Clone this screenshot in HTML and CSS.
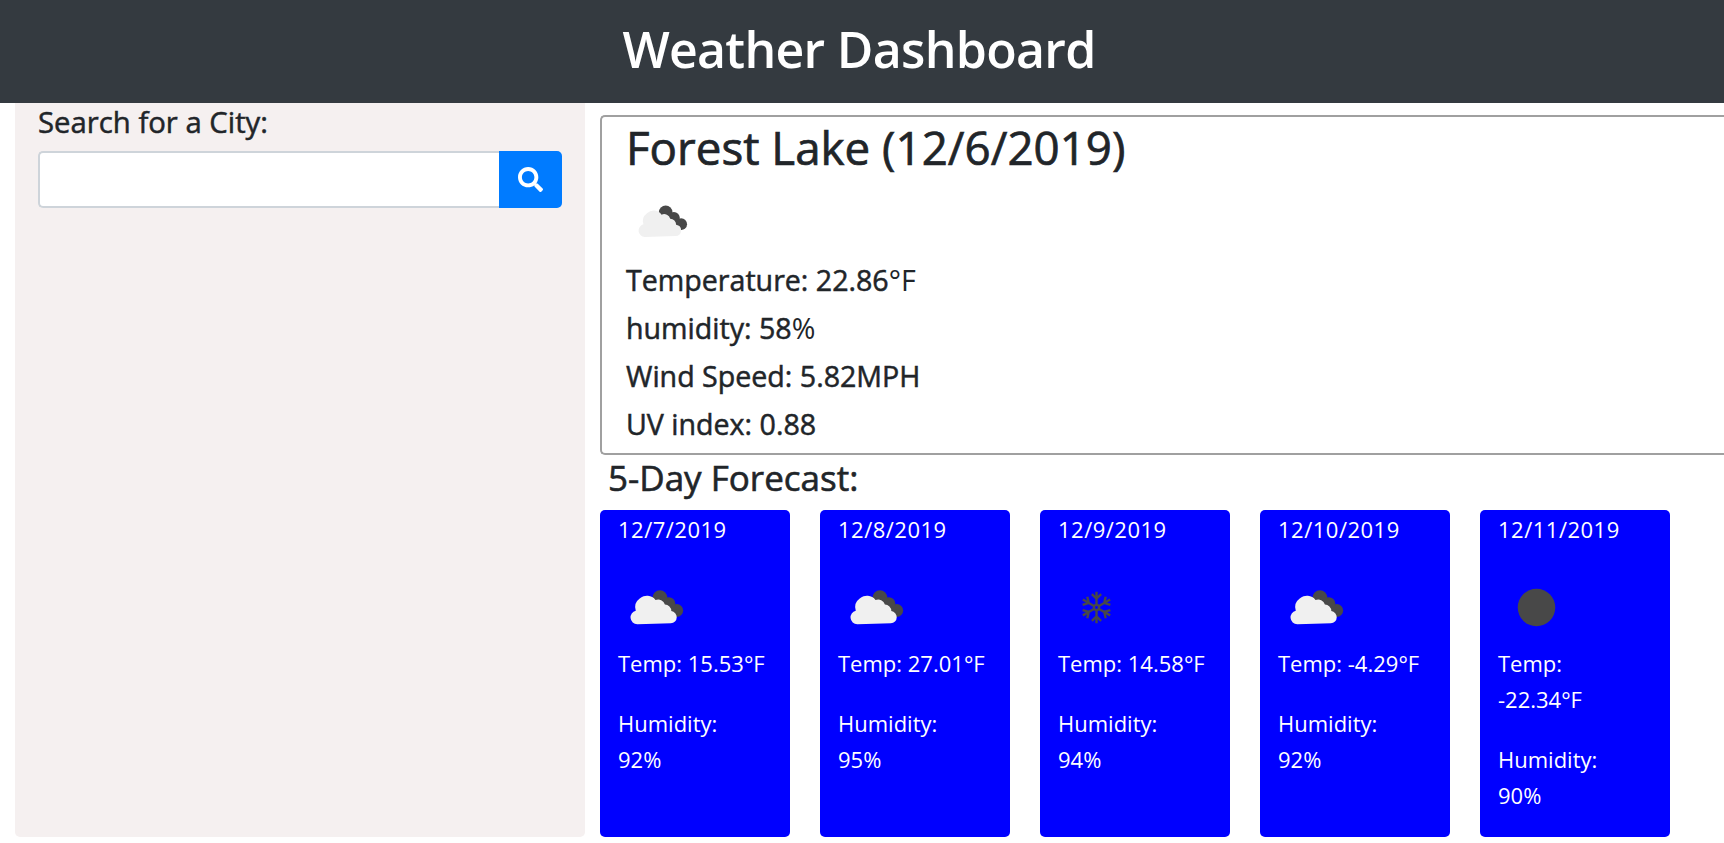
FILE: index.html
```html
<!DOCTYPE html>
<html lang="en">
<head>
  <meta charset="UTF-8">
  <title>Weather Dashboard</title>
  <link rel="stylesheet" href="styles.css">
</head>
<body>
  <svg class="icon-defs" width="0" height="0">
    <defs>
      <g id="clouds">
        <circle cx="42" cy="29" r="7.500" fill="#484848"/>
        <circle cx="51" cy="35" r="6.500" fill="#484848"/>
        <circle cx="59" cy="42" r="6.500" fill="#484848"/>
        <path d="M38 26 L56 32 L60 48 L44 48 Z" fill="#484848"/>
        <path d="M19 56 a7 7 0 0 1 -1.500 -13.800 a11 11 0 0 1 4 -12.200 a10.500 10.500 0 0 1 16 1.500 a7 7 0 0 1 9.500 4.500 a6.500 6.500 0 0 1 6.500 6.500 a6.500 6.500 0 0 1 5.500 6.500 a6 6 0 0 1 -6 6 Z" fill="currentColor"/>
      </g>
      <g id="snow" fill="none" stroke="#484848" stroke-width="2.400">
        <circle cx="38.500" cy="39" r="2.600"/>
        <g id="arm">
          <path d="M38.500 36 V23 M33.800 25.500 L38.500 30 L43.200 25.500"/>
        </g>
        <use href="#arm" transform="rotate(60 38.500 39)"/>
        <use href="#arm" transform="rotate(120 38.500 39)"/>
        <use href="#arm" transform="rotate(180 38.500 39)"/>
        <use href="#arm" transform="rotate(240 38.500 39)"/>
        <use href="#arm" transform="rotate(300 38.500 39)"/>
      </g>
    </defs>
  </svg>

  <header class="top-bar">
    <h1>Weather Dashboard</h1>
  </header>

  <div class="content">
    <aside class="sidebar">
      <label class="search-label" for="city">Search for a City:</label>
      <div class="search-group">
        <input class="search-input" id="city" type="text">
        <button class="search-btn" aria-label="Search">
          <svg viewBox="0 0 512 512" width="25" height="25"><path fill="#fff" d="M505 442.700L405.300 343c-4.500-4.500-10.600-7-17-7H372c27.600-35.300 44-79.700 44-128C416 93.100 322.900 0 208 0S0 93.100 0 208s93.100 208 208 208c48.300 0 92.700-16.400 128-44v16.300c0 6.400 2.500 12.500 7 17l99.700 99.700c9.400 9.400 24.600 9.400 33.900 0l28.300-28.300c9.400-9.400 9.400-24.600.1-34zM208 336c-70.700 0-128-57.200-128-128 0-70.700 57.200-128 128-128 70.700 0 128 57.200 128 128 0 70.700-57.200 128-128 128z"/></svg>
        </button>
      </div>
    </aside>

    <main class="main">
      <section class="current">
        <h2>Forest Lake (12/6/2019)</h2>
        <svg class="current-icon" viewBox="0 0 77 77" width="77" height="77"><use href="#clouds"/></svg>
        <p>Temperature: 22.86<span class="unit">°F</span></p>
        <p>humidity: 58<span class="unit">%</span></p>
        <p>Wind Speed: 5.82MPH</p>
        <p>UV index: 0.88</p>
      </section>

      <h3>5-Day Forecast:</h3>

      <div class="forecast">
        <div class="day">
          <div class="date">12/7/2019</div>
          <svg class="day-icon" viewBox="0 0 77 77" width="77" height="77"><use href="#clouds"/></svg>
          <p>Temp: 15.53°F</p>
          <p>Humidity:<br>92%</p>
        </div>
        <div class="day">
          <div class="date">12/8/2019</div>
          <svg class="day-icon" viewBox="0 0 77 77" width="77" height="77"><use href="#clouds"/></svg>
          <p>Temp: 27.01°F</p>
          <p>Humidity:<br>95%</p>
        </div>
        <div class="day">
          <div class="date">12/9/2019</div>
          <svg class="day-icon" viewBox="0 0 77 77" width="77" height="77"><use href="#snow"/></svg>
          <p>Temp: 14.58°F</p>
          <p>Humidity:<br>94%</p>
        </div>
        <div class="day">
          <div class="date">12/10/2019</div>
          <svg class="day-icon" viewBox="0 0 77 77" width="77" height="77"><use href="#clouds"/></svg>
          <p>Temp: -4.29°F</p>
          <p>Humidity:<br>92%</p>
        </div>
        <div class="day">
          <div class="date">12/11/2019</div>
          <svg class="day-icon" viewBox="0 0 77 77" width="77" height="77"><circle cx="38.500" cy="39" r="19" fill="#484848"/></svg>
          <p>Temp:<br>-22.34°F</p>
          <p>Humidity:<br>90%</p>
        </div>
      </div>
    </main>
  </div>
</body>
</html>
```

FILE: styles.css
```css
html, body { margin: 0; height: 100%; overflow: hidden; }
body { font-family: "Open Sans", "Noto Sans", sans-serif; color: #212529; background: #fff; }
p { margin: 0; }

.icon-defs { display: block; height: 0; }

.top-bar { height: 103px; box-sizing: border-box; padding: 0 6px 6px 0; background: #343a40; display: flex; align-items: center; justify-content: center; }
.top-bar h1 { margin: 0; font-size: 50px; font-weight: 600; color: #fff; letter-spacing: -0.700px; }

.content { display: flex; padding-left: 15px; gap: 15px; }

.sidebar { width: 570px; height: 734px; box-sizing: border-box; padding: 0 23px; background: #f5f0f0; border-radius: 0 0 5px 5px; }
.search-label { display: block; height: 48px; line-height: 38px; font-size: 29.300px; -webkit-text-stroke: 0.500px; }
.search-group { display: flex; height: 57px; }
.search-input { flex: 1; min-width: 0; box-sizing: border-box; border: 2px solid #ced4da; border-right: none; border-radius: 5px 0 0 5px; background: #fff; }
.search-btn { width: 63px; border: none; padding: 0; background: #007bff; border-radius: 0 5px 5px 0; display: flex; align-items: center; justify-content: center; }

.main { flex: 1; min-width: 0; padding-top: 12px; }

.current { height: 340px; box-sizing: border-box; border: 2px solid #a0a0a0; border-right: none; border-radius: 5px 0 0 5px; padding-left: 24px; }
.current h2 { margin: 0; height: 69px; line-height: 60px; font-size: 45.700px; -webkit-text-stroke: 0.700px; font-weight: 400; }
.current-icon { display: block; color: #f0f0f0; height: 70px; margin-left: -2px; }
.current p { height: 48px; line-height: 48px; font-size: 28.600px; -webkit-text-stroke: 0.500px; }
.current .unit { -webkit-text-stroke: 0; }

h3 { margin: 0; height: 55px; line-height: 46px; padding-left: 8px; font-size: 35px; font-weight: 400; -webkit-text-stroke: 0.600px; }

.forecast { display: flex; gap: 30px; }
.day { width: 190px; height: 327px; box-sizing: border-box; padding: 1px 18px 0; background: #00f; color: #fff; border-radius: 5px; font-size: 22px; line-height: 36px; }
.date { height: 58px; letter-spacing: 0.500px; }
.day-icon { display: block; color: #f0f0f0; height: 76px; }
.day p { margin-bottom: 24px; }
```
